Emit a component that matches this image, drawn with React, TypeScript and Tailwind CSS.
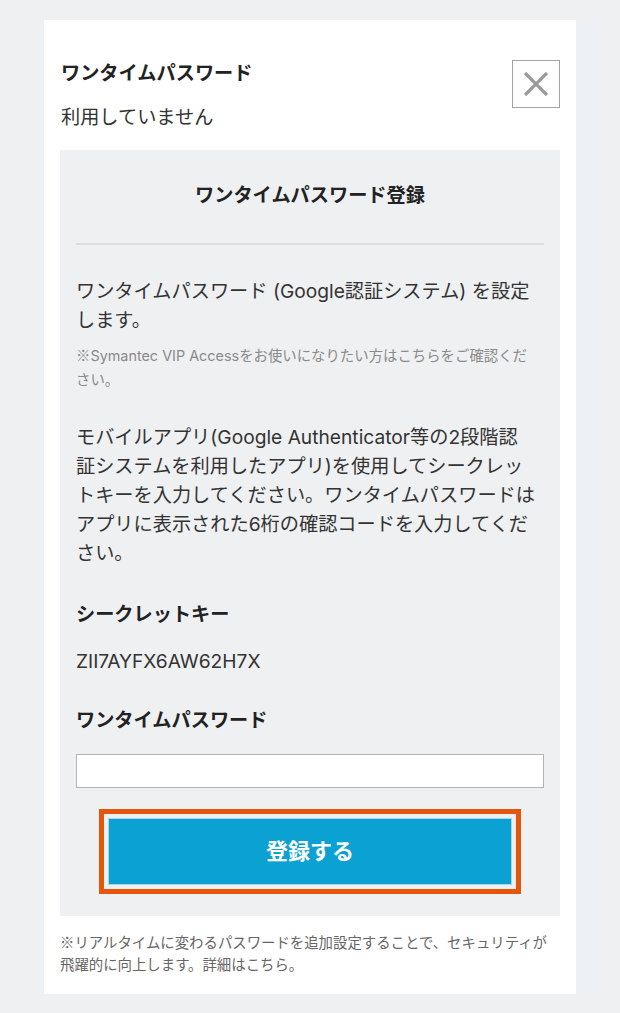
const font = { fontFamily: 'Inter, "Noto Sans CJK JP", sans-serif' };

function Kome() {
  return <span className="font-['Noto_Sans_CJK_JP']">※</span>;
}

export default function App() {
  return (
    <div className="min-h-[1013px] bg-[#eff0f2] pt-5 pb-5 text-[#333]" style={font}>
      <div className="ml-10 w-[560px] bg-[#edf1f5] pl-1">
        <div className="w-[532px] bg-white px-4 pt-10 pb-[19px]">
          {/* header */}
          <div className="flex items-start justify-between">
            <div className="pl-px">
              <h1 className="text-[19.2px] font-bold leading-[26px] text-[#222]">ワンタイムパスワード</h1>
              <p className="mt-[18px] text-[19.2px] leading-[26px] text-[#333]">利用していません</p>
            </div>
            <button className="flex h-12 w-12 items-center justify-center border-[1.5px] border-[#a3a3a3] bg-white">
              <svg width="24" height="24" viewBox="0 0 24 24">
                <path d="M1 1 L23 23 M23 1 L1 23" stroke="#9a9a9a" strokeWidth="3.2" fill="none" />
              </svg>
            </button>
          </div>

          {/* register panel */}
          <div className="mt-5 bg-[#eff0f2] px-4 pt-[30px] pb-[22px]">
            <h2 className="text-center text-[19.2px] font-bold leading-[30px] text-[#222]">
              ワンタイムパスワード登録
            </h2>
            <div className="mt-[33px] h-[2px] bg-[#dcdddf]" />

            <p className="mt-8 text-[19.2px] leading-[29px]">
              ワンタイムパスワード (Google認証システム) を設定
              <br />
              します。
            </p>
            <p className="mt-[8px] text-[14.4px] leading-[24px] text-[#8a8a8a]">
              <Kome />
              Symantec VIP Accessをお使いになりたい方はこちらをご確認くだ
              <br />
              さい。
            </p>

            <p className="mt-[31px] text-[19.2px] leading-[29px]">
              モバイルアプリ(Google Authenticator等の2段階認
              <br />
              証システムを利用したアプリ)を使用してシークレッ
              <br />
              トキーを入力してください。ワンタイムパスワードは
              <br />
              アプリに表示された6桁の確認コードを入力してくだ
              <br />
              さい。
            </p>

            <h3 className="mt-8 text-[19.2px] font-bold leading-[29px] text-[#222]">シークレットキー</h3>
            <p className="mt-[18px] text-[19.2px] leading-[29px]">ZII7AYFX6AW62H7X</p>

            <h3 className="mt-[30px] text-[19.2px] font-bold leading-[29px] text-[#222]">ワンタイムパスワード</h3>
            <input
              type="text"
              className="mt-[19px] block h-[34px] w-full border border-[#b4b4b4] bg-white px-2 outline-none"
            />

            <div className="mx-auto mt-[21px] w-[422px] border-[5px] border-[#e5560c] bg-[#eeeff1] p-1">
              <button className="flex h-[67px] w-full items-center justify-center border border-[#a9d5e6] bg-[#0ba1d3] text-[22px] font-bold text-white">
                登録する
              </button>
            </div>
          </div>

          <p className="mt-[15px] text-[14.4px] leading-[21.6px] text-[#666]">
            <Kome />
            リアルタイムに変わるパスワードを追加設定することで、セキュリティが
            <br />
            飛躍的に向上します。詳細はこちら。
          </p>
        </div>
      </div>
    </div>
  );
}
